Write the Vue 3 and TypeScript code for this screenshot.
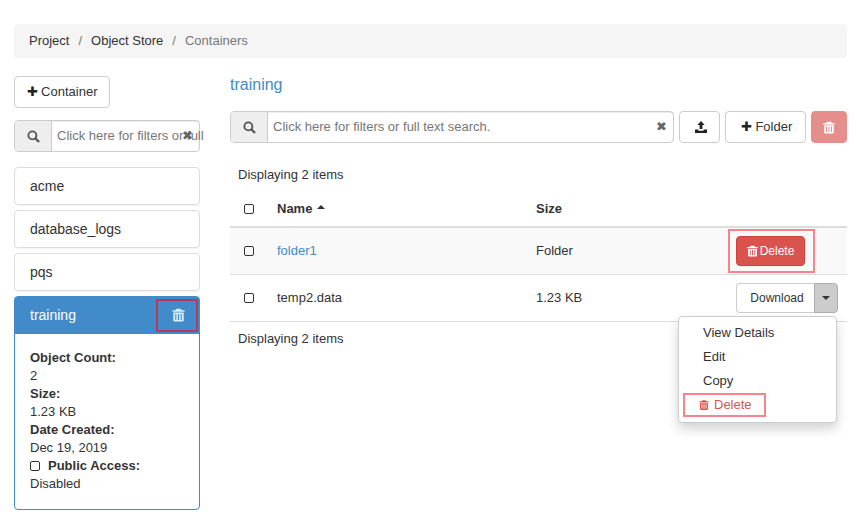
<script setup lang="ts">
interface Row {
  name: string;
  size: string;
  isFolder: boolean;
}

const rows: Row[] = [
  { name: 'folder1', size: 'Folder', isFolder: true },
  { name: 'temp2.data', size: '1.23 KB', isFolder: false },
];

const containers = ['acme', 'database_logs', 'pqs'];
const trashPath =
  'M3 1.6 4 .2h4l1 1.4h2.6V3H.4V1.6zM1.2 3.8h9.6v7a1.2 1.2 0 0 1-1.2 1.2H2.4a1.2 1.2 0 0 1-1.2-1.2zM3 5v5.6h1V5zm2.5 0v5.6h1V5zM8 5v5.6h1V5z';
</script>

<template>
  <div class="page">
    <ol class="crumbs">
      <li>Project</li>
      <li class="sep">/</li>
      <li>Object Store</li>
      <li class="sep">/</li>
      <li class="current">Containers</li>
    </ol>

    <div class="columns">
      <aside class="side">
        <button class="btn add-container"><span class="plus">✚</span>&nbsp;Container</button>

        <div class="search side-search">
          <span class="search-addon">
            <svg viewBox="0 0 14 14" width="13" height="13"><circle cx="5.8" cy="5.8" r="4.3" fill="none" stroke="#555" stroke-width="2" /><path d="m9 9 4 4" stroke="#555" stroke-width="2.4" /></svg>
          </span>
          <div class="search-input">
            <span class="placeholder">Click here for filters or full</span>
            <span class="clear">✖</span>
          </div>
        </div>

        <div v-for="c in containers" :key="c" class="container-item">{{ c }}</div>

        <div class="container-open">
          <div class="container-head">
            <span>training</span>
            <svg class="head-trash" viewBox="0 0 12 12" width="13" height="14"><path :d="trashPath" fill="#d9eefc" /></svg>
            <span class="mark mark-head"></span>
          </div>
          <div class="container-body">
            <b>Object Count:</b>
            <div>2</div>
            <b>Size:</b>
            <div>1.23 KB</div>
            <b>Date Created:</b>
            <div>Dec 19, 2019</div>
            <div class="public"><span class="check"></span><b>Public Access:</b></div>
            <div>Disabled</div>
          </div>
        </div>
      </aside>

      <main class="content">
        <h3 class="title">training</h3>

        <div class="toolbar">
          <div class="search main-search">
            <span class="search-addon">
              <svg viewBox="0 0 14 14" width="13" height="13"><circle cx="5.8" cy="5.8" r="4.3" fill="none" stroke="#555" stroke-width="2" /><path d="m9 9 4 4" stroke="#555" stroke-width="2.4" /></svg>
            </span>
            <div class="search-input">
              <span class="placeholder">Click here for filters or full text search.</span>
              <span class="clear">✖</span>
            </div>
          </div>
          <button class="btn upload">
            <svg viewBox="0 0 14 14" width="14" height="14"><path d="M7 1 10.6 5H8.4v4H5.6V5H3.4zM1 9.4h3.4v1.4h5.2V9.4H13V13H1z" fill="#222" /></svg>
          </button>
          <button class="btn folder"><span class="plus">✚</span>&nbsp;Folder</button>
          <button class="btn trash-off">
            <svg viewBox="0 0 12 12" width="12" height="13"><path :d="trashPath" fill="#fff" /></svg>
          </button>
        </div>

        <div class="count">Displaying 2 items</div>

        <div class="table">
          <div class="tr head">
            <div class="td c-check"><span class="check"></span></div>
            <div class="td c-name">Name <span class="sort"></span></div>
            <div class="td c-size">Size</div>
            <div class="td c-act"></div>
          </div>

          <div v-for="r in rows" :key="r.name" class="tr" :class="{ striped: r.isFolder }">
            <div class="td c-check"><span class="check"></span></div>
            <div class="td c-name" :class="{ link: r.isFolder }">{{ r.name }}</div>
            <div class="td c-size">{{ r.size }}</div>
            <div class="td c-act">
              <div v-if="r.isFolder" class="mark-wrap">
                <button class="btn danger">
                  <svg viewBox="0 0 12 12" width="11" height="12"><path :d="trashPath" fill="#fff" /></svg>
                  Delete
                </button>
                <span class="mark mark-delete"></span>
              </div>
              <div v-else class="split">
                <button class="btn download">Download</button>
                <button class="btn caret-btn"><span class="caret"></span></button>
                <ul class="menu">
                  <li>View Details</li>
                  <li>Edit</li>
                  <li>Copy</li>
                  <li class="menu-delete">
                    <svg viewBox="0 0 12 12" width="10" height="12"><path :d="trashPath" fill="#d9534f" /></svg>
                    Delete
                    <span class="mark mark-menu"></span>
                  </li>
                </ul>
              </div>
            </div>
          </div>
        </div>

        <div class="count bottom">Displaying 2 items</div>
      </main>
    </div>
  </div>
</template>

<style>
html,
body {
  margin: 0;
  background: #fff;
}
</style>

<style scoped>
.page {
  box-sizing: border-box;
  width: 858px;
  height: 523px;
  padding: 24px 11px 0 14px;
  overflow: hidden;
  font-family: "Liberation Sans", Arial, sans-serif;
  font-size: 13px;
  line-height: 18px;
  color: #333;
}

.crumbs {
  display: flex;
  align-items: center;
  gap: 9px;
  height: 34px;
  margin: 0;
  padding: 0 15px;
  list-style: none;
  background: #f5f5f5;
  border-radius: 4px;
}

.sep,
.current {
  color: #777;
}

.columns {
  display: flex;
  gap: 30px;
  margin-top: 18px;
}

.side {
  flex: none;
  width: 186px;
}

.btn {
  display: flex;
  align-items: center;
  justify-content: center;
  box-sizing: border-box;
  font: inherit;
  color: #333;
  background: #fff;
  border: 1px solid #ccc;
  border-radius: 4px;
  cursor: pointer;
}

.plus {
  font-size: 13px;
  color: #222;
}

.add-container {
  width: 96px;
  height: 32px;
  padding: 0;
}

.search {
  display: flex;
  box-sizing: border-box;
  height: 32px;
  border: 1px solid #ccc;
  border-radius: 4px;
}

.side-search {
  margin: 12px 0 15px;
}

.search-addon {
  display: flex;
  flex: none;
  align-items: center;
  justify-content: center;
  width: 36px;
  background: #eee;
  border-right: 1px solid #ccc;
  border-radius: 3px 0 0 3px;
}

.search-input {
  position: relative;
  flex: 1;
  min-width: 0;
  padding-left: 5px;
  line-height: 30px;
  white-space: nowrap;
  box-shadow: inset 0 1px 1px rgb(0 0 0 / 8%);
}

.placeholder {
  color: #777;
}

.clear {
  position: absolute;
  top: 0;
  right: 6px;
  bottom: 0;
  display: flex;
  align-items: center;
  font-size: 13px;
  color: #666;
}

.container-item {
  box-sizing: border-box;
  height: 38px;
  margin-bottom: 5px;
  padding-left: 15px;
  font-size: 14px;
  line-height: 36px;
  border: 1px solid #ddd;
  border-radius: 4px;
  box-shadow: 0 1px 1px rgb(0 0 0 / 5%);
}

.container-open {
  box-sizing: border-box;
  height: 214px;
  border: 1px solid #428bca;
  border-radius: 4px;
}

.container-head {
  position: relative;
  display: flex;
  align-items: center;
  justify-content: space-between;
  box-sizing: border-box;
  height: 37px;
  padding: 0 14px 2px 15px;
  font-size: 14px;
  color: #fff;
  background: #428bca;
}

.mark {
  position: absolute;
  box-sizing: border-box;
  pointer-events: none;
}

.mark-head {
  top: 2px;
  right: 1px;
  width: 42px;
  height: 33px;
  border: 2px solid #b23a5a;
}

.container-body {
  padding: 15px 15px 0;
}

.container-body b {
  display: block;
}

.public {
  display: flex;
  align-items: center;
  gap: 8px;
}

.check {
  display: inline-block;
  box-sizing: border-box;
  width: 10px;
  height: 10px;
  border: 1px solid #333;
  border-radius: 2px;
}

.content {
  flex: 1;
  min-width: 0;
}

.title {
  margin: 0 0 18px;
  font-size: 16px;
  font-weight: 400;
  line-height: 17px;
  color: #428bca;
}

.toolbar {
  display: flex;
  gap: 5px;
}

.main-search {
  flex: 1;
}

.upload {
  width: 41px;
  height: 32px;
  padding: 0 0 0 3px;
}

.folder {
  width: 81px;
  height: 32px;
  padding: 0 0 0 2px;
}

.trash-off {
  width: 36px;
  height: 32px;
  padding: 0;
  background: #e58e8c;
  border-color: #e58e8c;
}

.count {
  margin-top: 23px;
  padding-left: 8px;
}

.count.bottom {
  margin-top: 8px;
}

.table {
  margin-top: 7px;
}

.tr {
  display: flex;
  align-items: center;
  height: 47px;
  border-bottom: 1px solid #ddd;
  box-sizing: border-box;
}

.tr.head {
  height: 37px;
  font-weight: 700;
  border-bottom-width: 2px;
}

.tr.striped {
  background: #f9f9f9;
}

.td {
  display: flex;
  align-items: center;
}

.c-check {
  flex: none;
  width: 47px;
  padding-left: 14px;
  box-sizing: border-box;
}

.c-name {
  flex: none;
  width: 259px;
}

.c-size {
  flex: none;
  width: 200px;
}

.c-act {
  flex: 1;
  justify-content: flex-end;
  padding-right: 9px;
}

.link {
  color: #428bca;
}

.sort {
  width: 0;
  height: 0;
  margin: -4px 0 0 5px;
  border-right: 4px solid transparent;
  border-bottom: 4px solid #333;
  border-left: 4px solid transparent;
}

.mark-wrap {
  position: relative;
  display: flex;
  margin-right: 33px;
}

.danger {
  gap: 2px;
  width: 69px;
  height: 30px;
  padding: 0;
  font-size: 12px;
  color: #fff;
  background: #d9534f;
  border-color: #d43f3a;
}

.mark-delete {
  top: -7px;
  left: -8px;
  width: 87px;
  height: 44px;
  border: 2px solid #f8848a;
}

.split {
  position: relative;
  display: flex;
}

.download {
  width: 78px;
  height: 30px;
  padding: 0 0 0 3px;
  font-size: 12px;
  border-right: 0;
  border-radius: 4px 0 0 4px;
}

.caret-btn {
  width: 24px;
  height: 30px;
  padding: 0;
  background: #ccc;
  border-color: #adadad;
  border-radius: 0 4px 4px 0;
}

.caret {
  width: 0;
  height: 0;
  border-top: 4px solid #333;
  border-right: 4px solid transparent;
  border-left: 4px solid transparent;
}

.menu {
  position: absolute;
  top: 33px;
  right: 1px;
  z-index: 2;
  box-sizing: border-box;
  width: 159px;
  height: 107px;
  margin: 0;
  padding: 4px 0;
  list-style: none;
  background: #fff;
  border: 1px solid #ccc;
  border-radius: 4px;
  box-shadow: 0 6px 12px rgb(0 0 0 / 17.5%);
}

.menu li {
  position: relative;
  height: 24px;
  padding-left: 24px;
  line-height: 24px;
}

.menu li.menu-delete {
  display: flex;
  gap: 5px;
  align-items: center;
  padding-left: 20px;
  color: #d9534f;
}

.mark-menu {
  top: 0;
  left: 4px;
  width: 83px;
  height: 24px;
  border: 2px solid #f8848a;
}
</style>
